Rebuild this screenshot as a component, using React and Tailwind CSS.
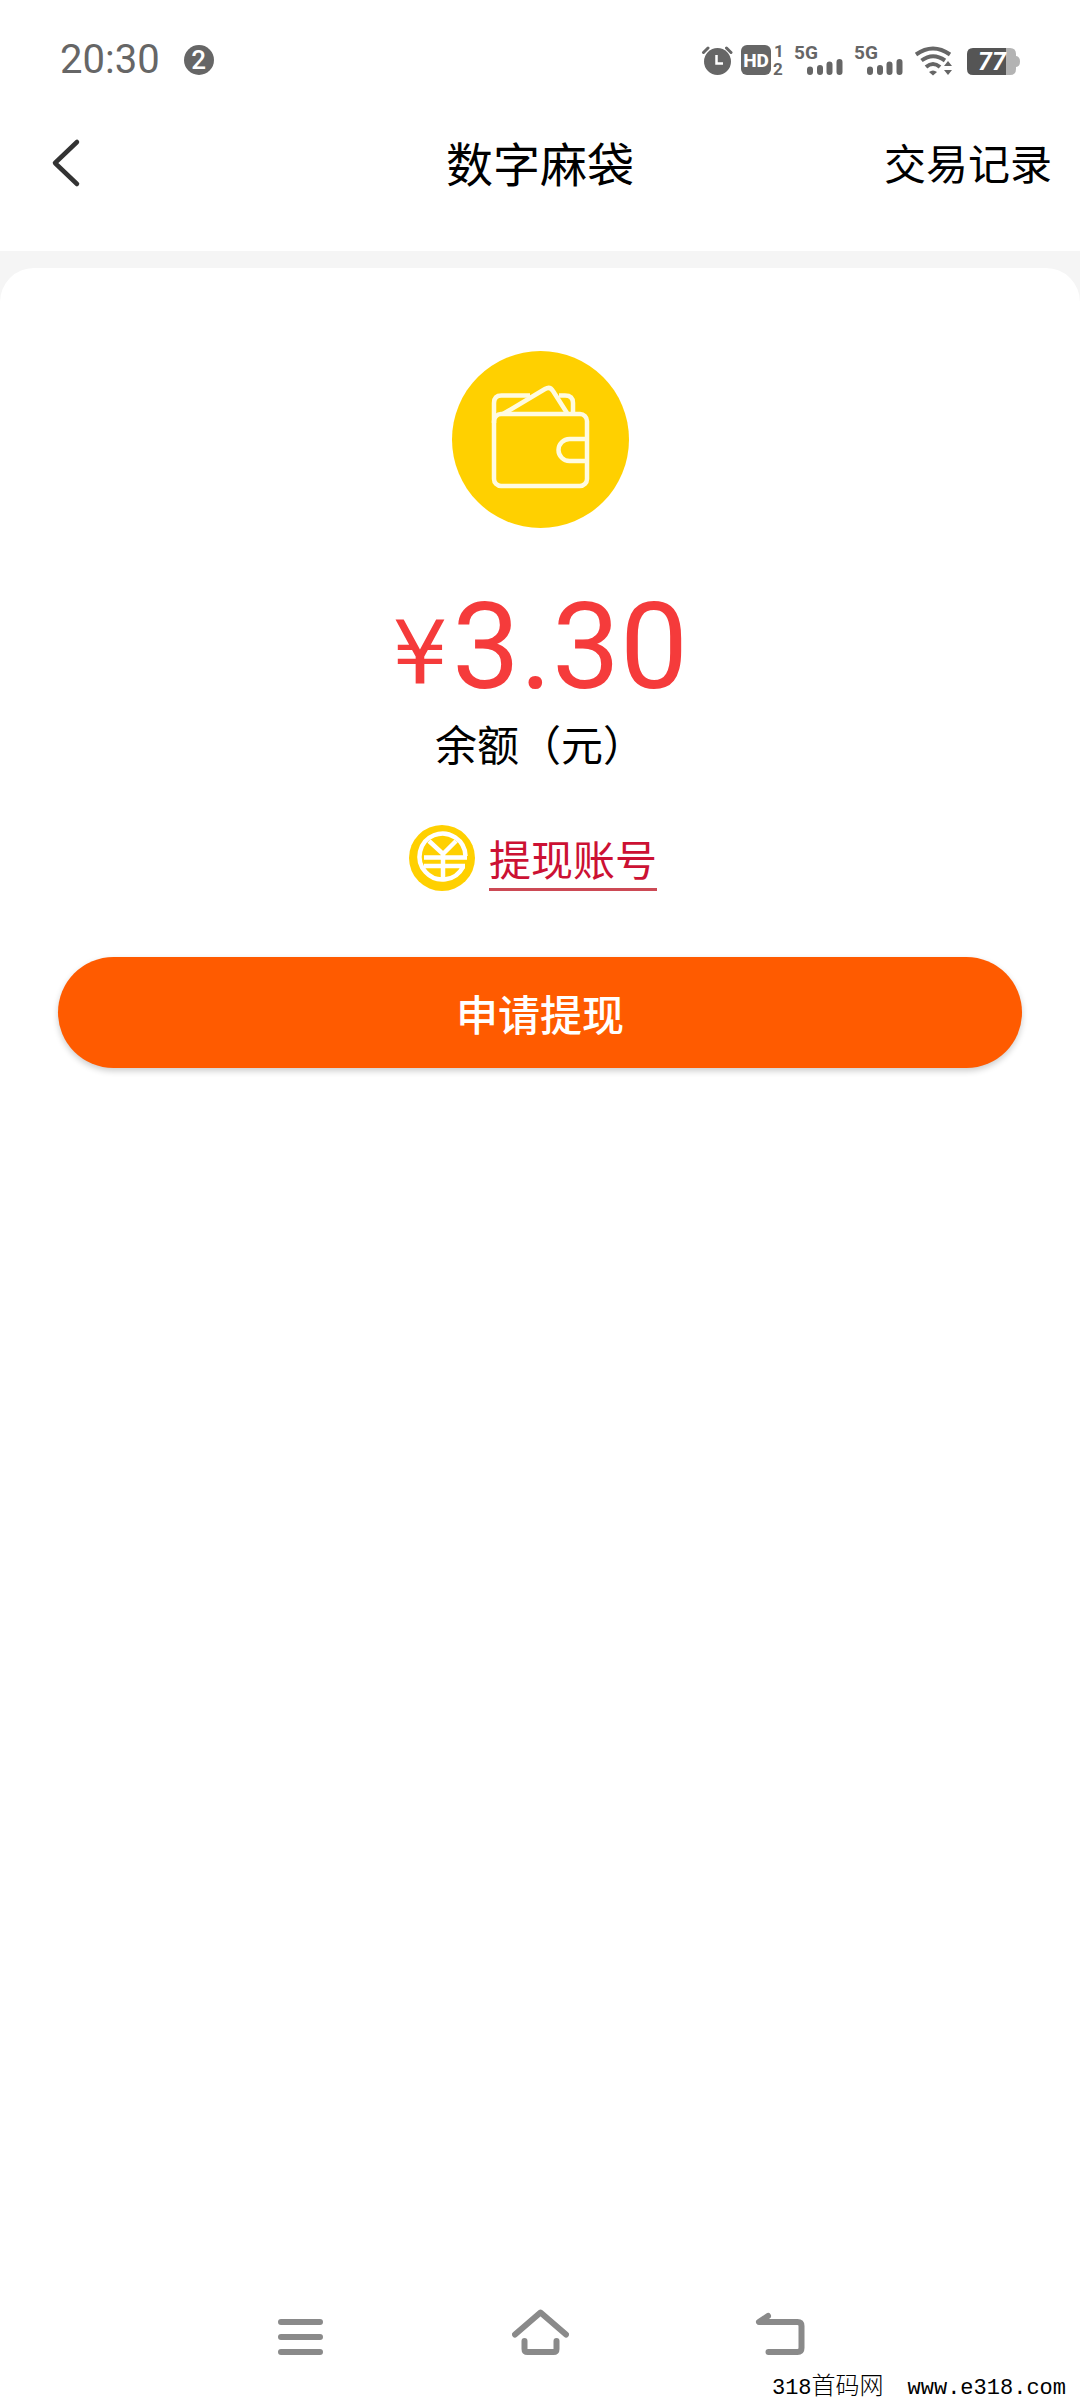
/**
 * Wallet page: status bar, header, balance card, withdraw button, system nav.
 */

const NAV_ICONS = [
  {
    label: '菜单',
    d: 'M9 15h39M9 30h39M9 45h39',
  },
  {
    label: '主页',
    d: 'M3 27.500L28.500 5.500L54 27.500M12.500 34V42Q12.500 45 15.500 45H41.500Q44.500 45 44.500 42V34',
  },
  {
    label: '返回',
    d: 'M16 9L7 15H45.500Q49.500 15 49.500 19V41Q49.500 45 45.500 45H16.500',
  },
]

function AlarmIcon() {
  return (
    <svg className="h-8 w-8" viewBox="0 0 32 32" aria-hidden="true">
      <circle cx="16.500" cy="17.500" r="13.500" fill="#666" />
      <path d="M2.500 8.500L7 4M30 8.500L25.500 4" stroke="#666" strokeWidth="3" strokeLinecap="round" />
      <path d="M15.500 11V19.500H22" fill="none" stroke="#fff" strokeWidth="2.500" />
    </svg>
  )
}

function HdIcon() {
  return (
    <svg className="h-8 w-11 overflow-visible" viewBox="0 0 44 32" aria-hidden="true">
      <rect y="1" width="30" height="30" rx="6" fill="#666" />
      <text x="15" y="23" textAnchor="middle" fill="#fff" className="font-['Roboto'] text-[19px] font-extrabold">HD</text>
      <text x="38" y="13" textAnchor="middle" fill="#666" className="font-['Roboto'] text-[17px] font-bold">1</text>
      <text x="37" y="31" textAnchor="middle" fill="#666" className="font-['Roboto'] text-[17px] font-bold">2</text>
    </svg>
  )
}

function SignalIcon() {
  return (
    <svg className="h-8 w-[52px] overflow-visible" viewBox="0 0 52 32" aria-hidden="true">
      <text x="1" y="15" fill="#666" className="font-['Roboto'] text-[19px] font-bold">5G</text>
      <path d="M17 25.500V28M27 24V28M36.500 20.500V28M46.500 18V28" stroke="#666" strokeWidth="6" strokeLinecap="round" />
    </svg>
  )
}

function WifiIcon() {
  return (
    <svg className="h-8 w-11" viewBox="0 0 44 32" aria-hidden="true">
      <g fill="none" stroke="#666" strokeWidth="4">
        <path d="M3 10.500Q20 -1.500 37 10.500" />
        <path d="M8.500 16.500Q20 8 32 16.500" />
        <path d="M13 23Q20 17 27 23" />
      </g>
      <path d="M16 28Q20 25 24 28L20 31.500Z" fill="#666" />
      <path d="M35 17L39 22H31ZM35 31L39 26H31Z" fill="#666" />
    </svg>
  )
}

function BatteryIcon() {
  return (
    <svg className="h-8 w-[55px]" viewBox="0 0 55 32" aria-hidden="true">
      <path d="M41 4H45Q51 4 51 10V12Q55 12.500 55 17.500T51 23V25Q51 31 45 31H41Z" fill="#b3b3b3" />
      <path d="M8 4H41V31H8Q2 31 2 25V10Q2 4 8 4Z" fill="#555" />
      <text x="27" y="26" textAnchor="middle" fill="#fff" className="font-['Roboto'] text-[25px] font-bold italic">77</text>
    </svg>
  )
}

function StatusBar() {
  return (
    <div className="flex h-[120px] items-center justify-between px-[60px] font-['Roboto',sans-serif] text-[#666]">
      <div className="flex items-center gap-6">
        <span className="text-[40px] leading-[46px]">20:30</span>
        <span className="flex size-[30px] items-center justify-center rounded-full bg-[#666] text-[26px] leading-[30px] font-medium text-white">2</span>
      </div>
      <div className="flex items-center gap-2">
        <AlarmIcon />
        <HdIcon />
        <SignalIcon />
        <SignalIcon />
        <WifiIcon />
        <BatteryIcon />
      </div>
    </div>
  )
}

function Header() {
  return (
    <header className="grid grid-cols-[1fr_auto_1fr] items-center px-7 pb-[43px] text-black">
      <button type="button" aria-label="返回" className="w-fit px-[22px]">
        <svg className="h-[88px] w-8" viewBox="0 0 32 88" fill="none" stroke="#333" strokeWidth="4.500" strokeLinecap="round" strokeLinejoin="round">
          <path d="M27 22L5 43L27 64" />
        </svg>
      </button>
      <h1 className="pb-1 text-[47px] leading-[84px]">数字麻袋</h1>
      <a href="#records" className="justify-self-end pb-1 text-[42px] leading-[84px]">交易记录</a>
    </header>
  )
}

function WalletIcon() {
  return (
    <svg className="size-[177px]" viewBox="0 0 177 177" aria-hidden="true">
      <circle cx="88.500" cy="88.500" r="88.500" fill="#ffd000" />
      <g fill="none" stroke="#fffbe0" strokeWidth="4.500" strokeLinejoin="round">
        <rect x="42" y="63" width="93" height="72" rx="7" />
        <path d="M42 72V52Q42 44.500 49.500 44.500H78M107 44.500H113Q121 44.500 121 52V62" />
        <path d="M51 63L93 38Q98 35 101 40L115 62" />
        <path d="M135 88H117.500A10.500 10.500 0 0 0 117.500 110H135" />
      </g>
    </svg>
  )
}

function CoinIcon() {
  return (
    <svg className="size-[66px]" viewBox="0 0 66 66" fill="none" aria-hidden="true">
      <circle cx="33" cy="33" r="33" fill="#ffd000" />
      <g stroke="#fff" strokeWidth="4.500">
        <path d="M56.500 31A23 23 0 1 0 54 42" />
        <path d="M20 16L34 29L47 16M34 28V56M15 32.500H58M15 41H56" />
      </g>
    </svg>
  )
}

export default function App() {
  return (
    <div className="flex min-h-screen flex-col bg-white font-['Noto_Sans_CJK_SC',sans-serif]">
      <StatusBar />
      <Header />

      <main className="flex flex-1 flex-col bg-[#f5f5f5] pt-[17px]">
        <section className="flex flex-1 flex-col items-center rounded-t-[34px] bg-white px-[58px] pt-[83px]">
          <WalletIcon />

          <p className="mt-[59px] flex items-end gap-1 text-[#f53b3b]">
            <span className="font-['DejaVu_Sans',sans-serif] text-[88px] leading-[108px]">¥</span>
            <span className="font-['Roboto',sans-serif] text-[121px] leading-[120px]">3.30</span>
          </p>
          <p className="mt-[6px] text-[42px] leading-[60px] text-black">余额（元）</p>

          <a href="#account" className="mt-[52px] mr-[14px] flex items-end gap-[14px]">
            <CoinIcon />
            <span className="border-b-3 border-[#cc4a55] text-[42px] leading-[60px] text-[#cc1133]">提现账号</span>
          </a>

          <button
            type="button"
            className="mt-[66px] h-[111px] w-full rounded-full bg-[#ff5b00] text-[42px] font-medium text-white shadow-[0_3px_6px_rgba(0,0,0,0.2)]"
          >
            申请提现
          </button>
        </section>
      </main>

      <nav className="mb-[10px] flex justify-center gap-[183px]">
        {NAV_ICONS.map(icon => (
          <button key={icon.label} type="button" aria-label={icon.label}>
            <svg className="h-[60px] w-[57px]" viewBox="0 0 57 60" fill="none" stroke="#8a8a8a" strokeWidth="6" strokeLinecap="round" strokeLinejoin="round">
              <path d={icon.d} />
            </svg>
          </button>
        ))}
      </nav>

      <footer className="flex items-center justify-end gap-6 pr-[14px] font-['Liberation_Mono','Noto_Sans_CJK_SC',monospace] text-[22px] leading-[22px] text-black">
        <span>
          318<span className="text-[24px] font-light">首码网</span>
        </span>
        <span>www.e318.com</span>
      </footer>
    </div>
  )
}
